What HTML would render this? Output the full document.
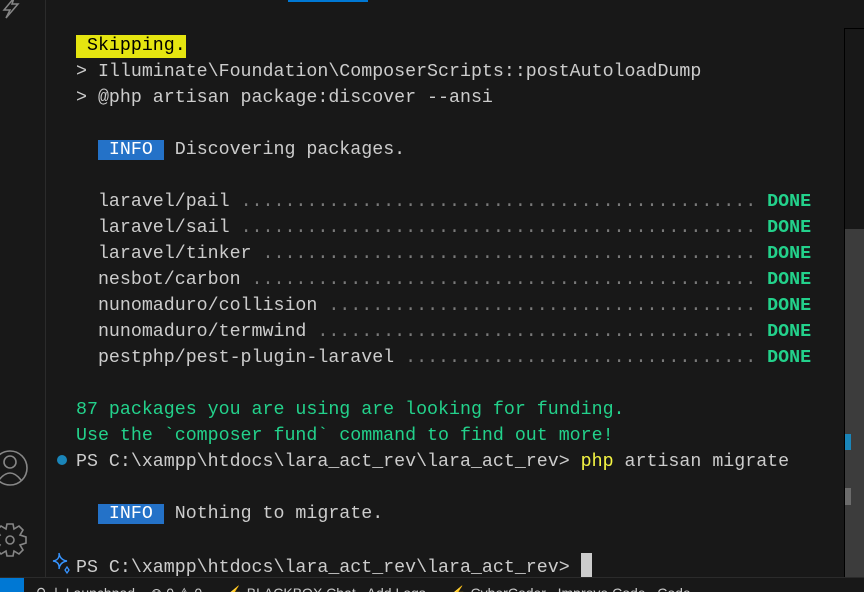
<!DOCTYPE html>
<html><head><meta charset="utf-8"><style>
html,body{margin:0;padding:0;}
body{width:864px;height:591px;background:#181818;position:relative;overflow:hidden;font-family:"Liberation Mono",monospace;}
#act{position:absolute;left:0;top:0;width:45px;height:578px;border-right:1px solid #2b2b2b;background:#181818;}
#term{position:absolute;left:76px;top:33px;font-size:18.3px;color:#cccccc;}
.l{height:26px;line-height:26px;white-space:pre;}
.g{color:#23d18b}
.d{color:#7a7a7a}
.b{color:#23d18b;font-weight:bold}
.info{background:#2472c8;color:#fff}
.sk{background:#e5e510;color:#000;display:inline-block;line-height:23px}
.y{color:#f5f543}
#sb{position:absolute;left:0;top:577px;width:864px;height:14px;background:#181818;border-top:1px solid #2b2b2b;font-family:"Liberation Sans",sans-serif;font-size:14px;color:#ccc;white-space:nowrap;overflow:hidden;}
</style></head><body>
<div id="act">
<svg width="45" height="578" style="position:absolute;left:0;top:0">
<path d="M14 -2 L4 10 L10 10 L6 18 L18 4 L12 4 Z" fill="none" stroke="#868686" stroke-width="1.5"/>
<circle cx="10" cy="468" r="17" fill="none" stroke="#868686" stroke-width="1.6"/>
<circle cx="10" cy="462" r="6" fill="none" stroke="#868686" stroke-width="1.6"/>
<path d="M-1 480 Q10 466 21 480" fill="none" stroke="#868686" stroke-width="1.6"/>
<g transform="translate(10,540)" fill="none" stroke="#868686" stroke-width="1.6">
<circle r="4"/>
<path d="M-3 -16 L3 -16 L4 -11 L9 -14 L13 -10 L10 -5 L16 -3 L16 3 L10 5 L13 10 L9 14 L4 11 L3 16 L-3 16 L-4 11 L-9 14 L-13 10 L-10 5 L-16 3 L-16 -3 L-10 -5 L-13 -10 L-9 -14 L-4 -11 Z"/>
</g>
</svg>
</div>
<div style="position:absolute;left:288px;top:0;width:80px;height:2px;background:#0078d4"></div>
<div id="term">
<div class="l"><span class="sk"> Skipping.</span></div>
<div class="l">&gt; Illuminate\Foundation\ComposerScripts::postAutoloadDump</div>
<div class="l">&gt; @php artisan package:discover --ansi</div>
<div class="l"> </div>
<div class="l">  <span class="info"> INFO </span> Discovering packages.</div>
<div class="l"> </div>
<div class="l">  laravel/pail <span class="d">...............................................</span> <span class="b">DONE</span></div>
<div class="l">  laravel/sail <span class="d">...............................................</span> <span class="b">DONE</span></div>
<div class="l">  laravel/tinker <span class="d">.............................................</span> <span class="b">DONE</span></div>
<div class="l">  nesbot/carbon <span class="d">..............................................</span> <span class="b">DONE</span></div>
<div class="l">  nunomaduro/collision <span class="d">.......................................</span> <span class="b">DONE</span></div>
<div class="l">  nunomaduro/termwind <span class="d">........................................</span> <span class="b">DONE</span></div>
<div class="l">  pestphp/pest-plugin-laravel <span class="d">................................</span> <span class="b">DONE</span></div>
<div class="l"> </div>
<div class="l g">87 packages you are using are looking for funding.</div>
<div class="l g">Use the `composer fund` command to find out more!</div>
<div class="l">PS C:\xampp\htdocs\lara_act_rev\lara_act_rev&gt; <span class="y">php</span> artisan migrate</div>
<div class="l"> </div>
<div class="l">  <span class="info"> INFO </span> Nothing to migrate.</div>
<div class="l"> </div>
<div class="l">PS C:\xampp\htdocs\lara_act_rev\lara_act_rev&gt; <span style="display:inline-block;width:11px;height:24px;background:#cccccc;vertical-align:-5px"></span></div>
</div>
<svg width="30" height="30" style="position:absolute;left:50px;top:550px">
<path d="M9 3 Q10 10 3 11 Q10 12 9 19 Q10 12 17 11 Q10 10 9 3Z" fill="none" stroke="#3794ff" stroke-width="1.4"/>
<path d="M17 17 L19 20 L17 23 L15 20 Z" fill="none" stroke="#3794ff" stroke-width="1.3"/>
</svg>
<div style="position:absolute;left:57px;top:455px;width:10px;height:10px;border-radius:50%;background:#1a85b9"></div>
<div style="position:absolute;left:844px;top:28px;width:20px;height:549px;border-left:1px solid #000;border-top:1px solid #000;background:#181818"></div>
<div style="position:absolute;left:845px;top:229px;width:19px;height:348px;background:#3c3c3c"></div>
<div style="position:absolute;left:845px;top:434px;width:6px;height:16px;background:#1a85b9"></div>
<div style="position:absolute;left:845px;top:488px;width:6px;height:17px;background:#6b6b6b"></div>
<div id="sb">
<div style="position:absolute;left:0;top:0;width:24px;height:14px;background:#0078d4"></div>
<span style="position:absolute;left:36px;top:8px;line-height:14px">⚲ ⇃ Launchpad &nbsp;&nbsp; ⊗ 0 ⚠ 0 &nbsp;&nbsp;&nbsp;&nbsp; <span style="color:#e8a33d">⚡</span> BLACKBOX Chat &nbsp; Add Logs &nbsp;&nbsp;&nbsp;&nbsp; <span style="color:#e8c33d">⚡</span> CyberCoder &nbsp; Improve Code &nbsp; Code</span>
</div>
</body></html>
